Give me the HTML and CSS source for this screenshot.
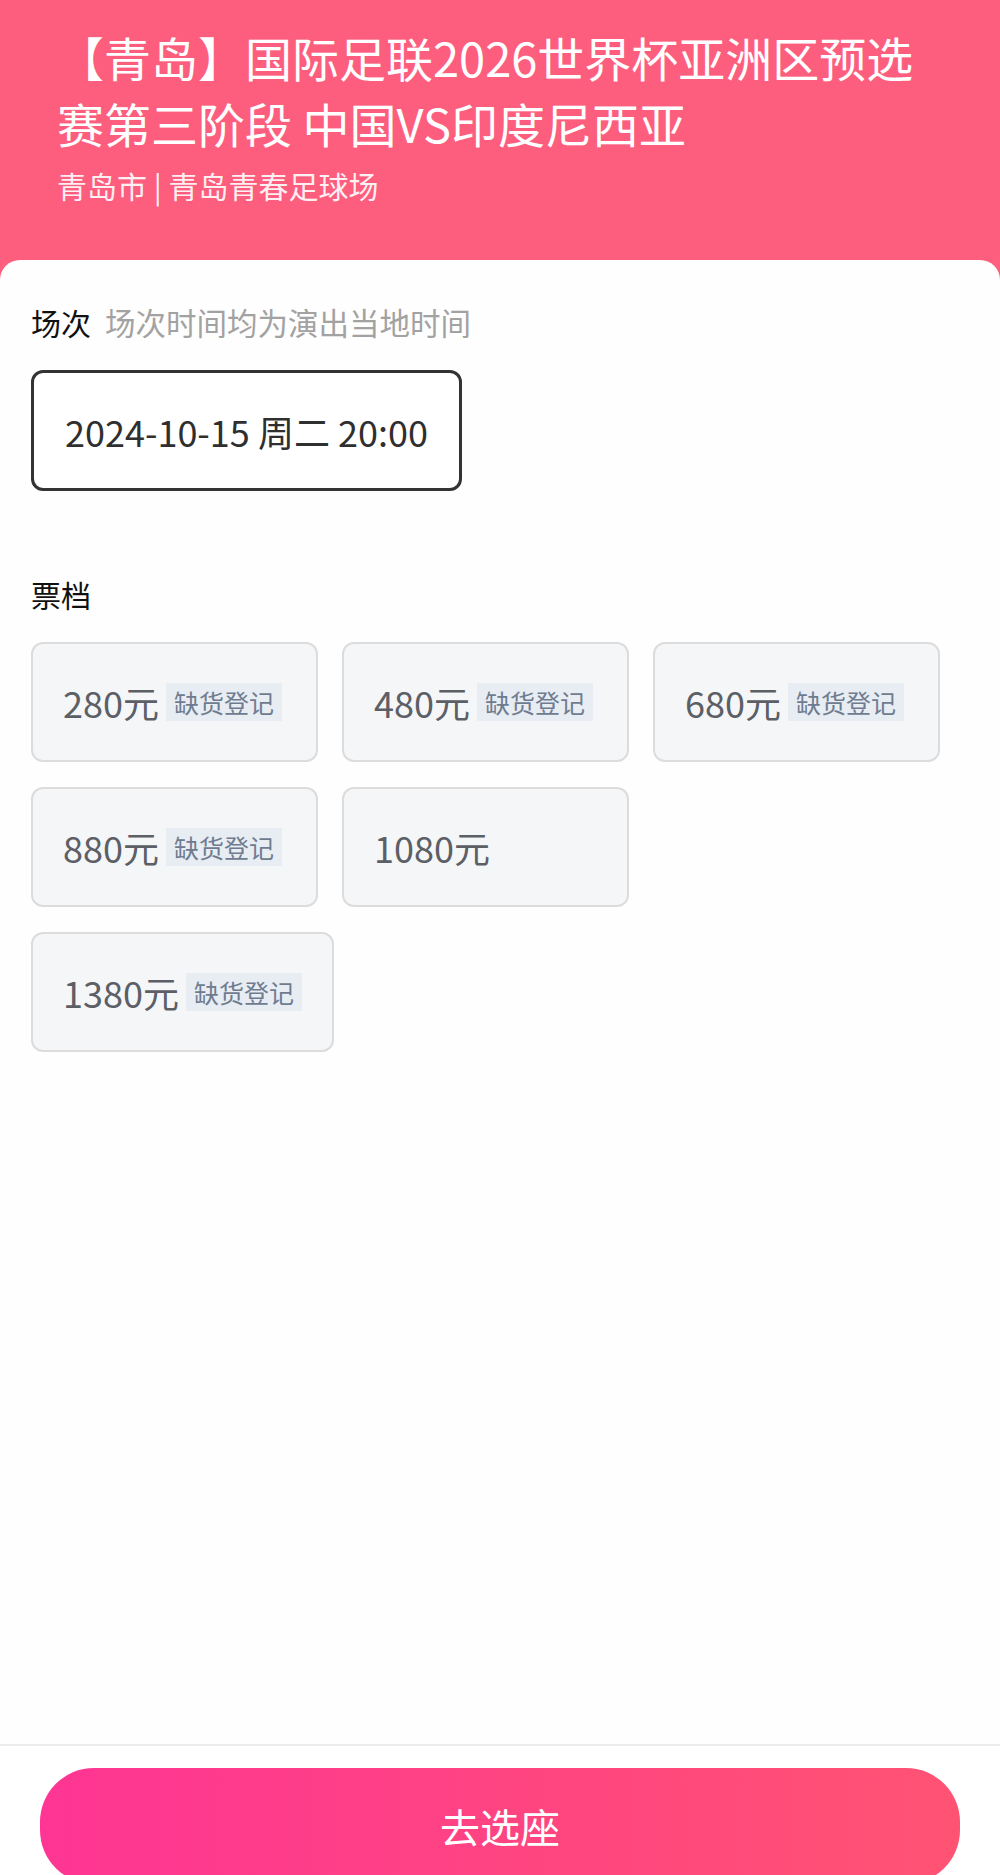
FILE: index.html
```html
<!DOCTYPE html>
<html lang="zh-CN">
<head>
<meta charset="utf-8">
<title>选择场次票档</title>
<link rel="stylesheet" href="styles.css">
</head>
<body>
<div class="page">
  <header class="hero">
    <h1 class="hero-title">【青岛】国际足联2026世界杯亚洲区预选赛第三阶段 中国VS印度尼西亚</h1>
    <p class="hero-sub">青岛市 | 青岛青春足球场</p>
  </header>

  <main class="sheet">
    <section class="block">
      <div class="block-head">
        <span class="block-label">场次</span>
        <span class="block-hint">场次时间均为演出当地时间</span>
      </div>
      <div class="session-list">
        <div class="session is-active">2024-10-15 周二 20:00</div>
      </div>
    </section>

    <section class="block block-tickets">
      <div class="block-head">
        <span class="block-label">票档</span>
      </div>
      <div class="ticket-list">
        <div class="ticket"><span class="ticket-price">280元</span><span class="ticket-tag">缺货登记</span></div>
        <div class="ticket"><span class="ticket-price">480元</span><span class="ticket-tag">缺货登记</span></div>
        <div class="ticket"><span class="ticket-price">680元</span><span class="ticket-tag">缺货登记</span></div>
        <div class="ticket"><span class="ticket-price">880元</span><span class="ticket-tag">缺货登记</span></div>
        <div class="ticket"><span class="ticket-price">1080元</span></div>
        <div class="ticket"><span class="ticket-price">1380元</span><span class="ticket-tag">缺货登记</span></div>
      </div>
    </section>
  </main>

  <footer class="action-bar">
    <button class="action-btn" type="button">去选座</button>
  </footer>
</div>
</body>
</html>
```

FILE: styles.css
```css
* {
  box-sizing: border-box;
}

html, body {
  margin: 0;
  padding: 0;
}

body {
  font-family: "Noto Sans CJK SC", "Noto Sans", sans-serif;
  background: #ffffff;
}

.page {
  width: 1000px;
  height: 1875px;
  overflow: hidden;
  display: flex;
  flex-direction: column;
  background: #fe5e7e;
}

.hero {
  flex: 0 0 260px;
  padding: 24px 57px 0 57px;
  color: #ffffff;
}

.hero-title {
  margin: 0;
  font-size: 47px;
  line-height: 66px;
  font-weight: 400;
}

.hero-sub {
  margin: 9px 0 0;
  font-size: 30px;
  line-height: 40px;
  color: rgba(255, 255, 255, 0.92);
}

.sheet {
  flex: 1 1 auto;
  min-height: 0;
  background: #fefefe;
  border-radius: 20px 20px 0 0;
  padding: 42px 31px 0;
}

.block-head {
  display: flex;
  align-items: center;
  height: 40px;
}

.block-label {
  font-size: 30px;
  line-height: 40px;
  color: #111111;
}

.block-hint {
  margin-left: 14px;
  font-size: 30.5px;
  line-height: 40px;
  color: #a2a2a2;
}

.session-list {
  margin-top: 28px;
  display: flex;
}

.session {
  height: 121px;
  border: 3px solid #333333;
  border-radius: 12px;
  padding: 0 31px;
  display: flex;
  align-items: center;
  white-space: nowrap;
  font-size: 36px;
  color: #2f2f2f;
  background: #ffffff;
}

.block-tickets {
  margin-top: 83px;
}

.ticket-list {
  margin-top: 28px;
  width: 912px;
  display: flex;
  flex-wrap: wrap;
  gap: 25px 24px;
}

.ticket {
  min-width: 287px;
  height: 120px;
  border: 2px solid #dcdcdc;
  border-radius: 12px;
  background: #f5f6f8;
  padding: 0 30px;
  display: flex;
  align-items: center;
  white-space: nowrap;
}

.ticket-price {
  font-size: 36px;
  line-height: 40px;
  color: #5c5f66;
}

.ticket-tag {
  margin-left: 7px;
  height: 38px;
  padding: 0 8px;
  background: #e8edf3;
  font-size: 25px;
  line-height: 38px;
  color: #6f7c90;
}

.action-bar {
  flex: 0 0 131px;
  min-height: 0;
  background: #ffffff;
  border-top: 2px solid #ececec;
  padding: 22px 40px 0;
}

.action-btn {
  display: block;
  width: 100%;
  height: 116px;
  border: none;
  border-radius: 54px;
  background: linear-gradient(90deg, #fe3594 0%, #ff4580 55%, #ff5373 100%);
  color: #ffffff;
  font-family: "Noto Sans CJK SC", "Noto Sans", sans-serif;
  font-size: 40px;
  line-height: 116px;
  padding: 0;
}
```
